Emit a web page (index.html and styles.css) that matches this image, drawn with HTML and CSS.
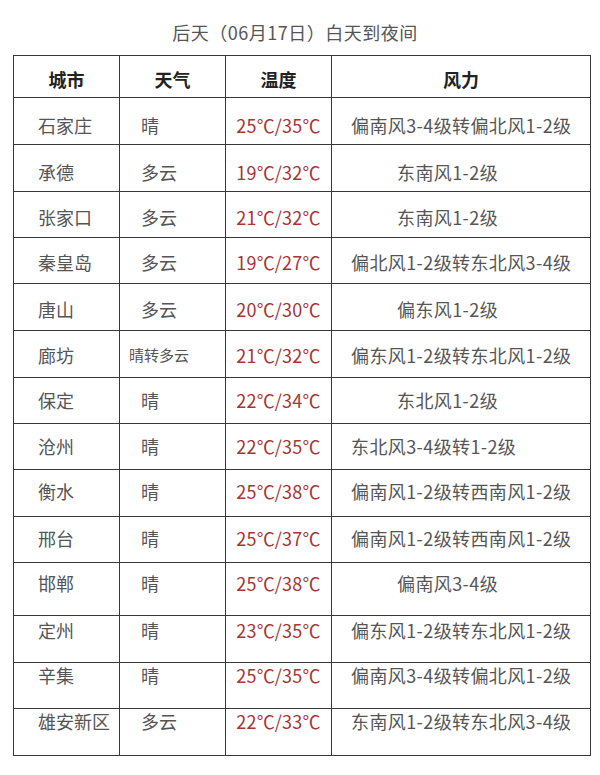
FILE: index.html
```html
<!DOCTYPE html>
<html lang="zh-CN">
<head>
<meta charset="utf-8">
<title>后天白天到夜间天气</title>
<link rel="stylesheet" href="styles.css">
</head>
<body>
<div class="page">
  <h1 class="title">后天（06月17日）白天到夜间</h1>
  <table class="weather">
    <colgroup>
      <col class="c-city"><col class="c-sky"><col class="c-temp"><col class="c-wind">
    </colgroup>
    <thead>
      <tr class="head"><th>城市</th><th>天气</th><th>温度</th><th>风力</th></tr>
    </thead>
    <tbody>
      <tr class="h47 p15"><td class="city">石家庄</td><td class="sky">晴</td><td class="temp">25℃/35℃</td><td class="wind">偏南风3-4级转偏北风1-2级</td></tr>
      <tr class="h47 p15"><td class="city">承德</td><td class="sky">多云</td><td class="temp">19℃/32℃</td><td class="wind short">东南风1-2级</td></tr>
      <tr class="h46 p13"><td class="city">张家口</td><td class="sky">多云</td><td class="temp">21℃/32℃</td><td class="wind short">东南风1-2级</td></tr>
      <tr class="h46 p12"><td class="city">秦皇岛</td><td class="sky">多云</td><td class="temp">19℃/27℃</td><td class="wind">偏北风1-2级转东北风3-4级</td></tr>
      <tr class="h47 p13"><td class="city">唐山</td><td class="sky">多云</td><td class="temp">20℃/30℃</td><td class="wind short">偏东风1-2级</td></tr>
      <tr class="h47 p12"><td class="city">廊坊</td><td class="sky small">晴转多云</td><td class="temp">21℃/32℃</td><td class="wind">偏东风1-2级转东北风1-2级</td></tr>
      <tr class="h46 p10"><td class="city">保定</td><td class="sky">晴</td><td class="temp">22℃/34℃</td><td class="wind short">东北风1-2级</td></tr>
      <tr class="h46 p10"><td class="city">沧州</td><td class="sky">晴</td><td class="temp">22℃/35℃</td><td class="wind">东北风3-4级转1-2级</td></tr>
      <tr class="h47 p9"><td class="city">衡水</td><td class="sky">晴</td><td class="temp">25℃/38℃</td><td class="wind">偏南风1-2级转西南风1-2级</td></tr>
      <tr class="h46 p9"><td class="city">邢台</td><td class="sky">晴</td><td class="temp">25℃/37℃</td><td class="wind">偏南风1-2级转西南风1-2级</td></tr>
      <tr class="h53 p8"><td class="city">邯郸</td><td class="sky">晴</td><td class="temp">25℃/38℃</td><td class="wind short">偏南风3-4级</td></tr>
      <tr class="h47 p2"><td class="city">定州</td><td class="sky">晴</td><td class="temp">23℃/35℃</td><td class="wind">偏东风1-2级转东北风1-2级</td></tr>
      <tr class="h46 p0"><td class="city">辛集</td><td class="sky">晴</td><td class="temp">25℃/35℃</td><td class="wind">偏南风3-4级转偏北风1-2级</td></tr>
      <tr class="h47 p0"><td class="city">雄安新区</td><td class="sky">多云</td><td class="temp">22℃/33℃</td><td class="wind">东南风1-2级转东北风3-4级</td></tr>
    </tbody>
  </table>
</div>
</body>
</html>
```
FILE: styles.css
```css
html, body {
  margin: 0;
  padding: 0;
  background: #ffffff;
}

body {
  font-family: "Noto Sans CJK SC", "Noto Sans", sans-serif;
  color: #555555;
}

.page {
  width: 600px;
  padding: 20px 0 0 13px;
  box-sizing: border-box;
}

.title {
  margin: 0 0 11px 0;
  padding-right: 23px;
  font-size: 18px;
  line-height: 24px;
  font-weight: 400;
  letter-spacing: 0.5px;
  text-align: center;
  color: #555555;
}

.weather {
  border-collapse: collapse;
  table-layout: fixed;
  width: 577px;
}

.c-city, .c-sky, .c-temp { width: 106px; }
.c-wind { width: 259px; }

.weather th,
.weather td {
  border: 1px solid #383838;
  padding: 0;
  font-size: 18px;
  line-height: 24px;
  vertical-align: top;
  white-space: nowrap;
}

.head { height: 42px; }

.weather th {
  padding-top: 11px;
  font-weight: 700;
  color: #222222;
  text-align: center;
}

.h46 { height: 46px; }
.h47 { height: 47px; }
.h53 { height: 53px; }

.p15 td { padding-top: 15px; }
.p13 td { padding-top: 13px; }
.p12 td { padding-top: 12px; }
.p10 td { padding-top: 10px; }
.p9 td { padding-top: 9px; }
.p8 td { padding-top: 8px; }
.p2 td { padding-top: 2px; }
.p0 td { padding-top: 0; }

.city {
  padding-left: 24px !important;
  text-align: left;
}

.sky {
  padding-left: 21px !important;
  text-align: left;
}

.sky.small {
  padding-left: 9px !important;
  font-size: 15px !important;
}

.temp {
  text-align: center;
  color: #a83434;
  letter-spacing: 0.2px;
}

.wind {
  padding-left: 19px !important;
  text-align: left;
  letter-spacing: 0.4px;
}

.wind.short {
  padding-left: 65px !important;
}
```
